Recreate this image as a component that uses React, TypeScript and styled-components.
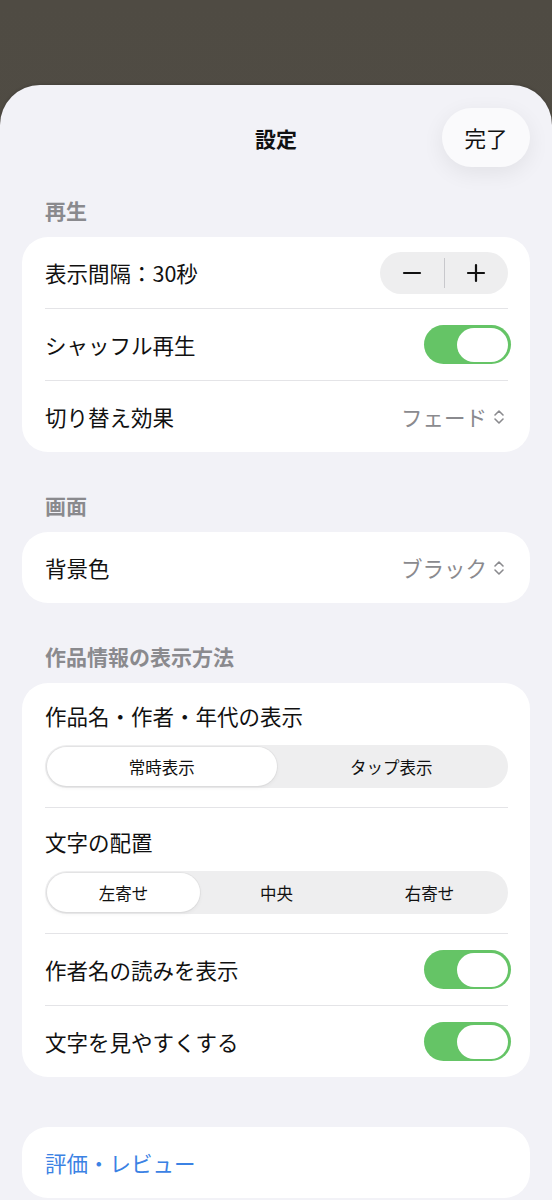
import React from 'react';
import styled, { createGlobalStyle } from 'styled-components';

const GlobalStyle = createGlobalStyle`
  html, body {
    margin: 0;
    padding: 0;
    background: #534f47;
  }
  body {
    font-family: "Noto Sans CJK JP", "Noto Sans", sans-serif;
    -webkit-font-smoothing: antialiased;
  }
`;

// --- LAYOUT ---

const Backdrop = styled.div`
  min-height: 1200px;
  padding-top: 85px;
  box-sizing: border-box;
  background: linear-gradient(180deg, #4f4b43 0%, #555149 100%);
`;

const Sheet = styled.div`
  background: #f2f2f7;
  border-radius: 40px 40px 0 0;
  min-height: 1115px;
  padding: 0 22px 40px;
  box-sizing: border-box;
  box-shadow: 0 -1px 3px rgba(0, 0, 0, 0.15);
`;

const Header = styled.header`
  height: 113px;
  display: grid;
  grid-template-columns: 88px 1fr 88px;
  align-items: start;
  padding-top: 23px;
  box-sizing: border-box;
`;

const Title = styled.h1`
  grid-column: 2;
  margin: 0;
  height: 59px;
  display: flex;
  align-items: center;
  justify-content: center;
  font-size: 21px;
  font-weight: 700;
  color: #111;
`;

const DoneButton = styled.button`
  grid-column: 3;
  width: 88px;
  height: 59px;
  border: none;
  border-radius: 30px;
  background: #fafafc;
  box-shadow: 0 6px 22px rgba(0, 0, 0, 0.07);
  font-family: inherit;
  font-size: 21.5px;
  color: #111;
  padding: 0;
`;

const SectionTitle = styled.h2<{ $first?: boolean }>`
  margin: ${p => (p.$first ? '0' : '41px')} 0 15px;
  padding: 0 23px;
  font-size: 21px;
  line-height: 24px;
  font-weight: 700;
  color: #8a8a8e;
`;

const Card = styled.section<{ $gap?: number }>`
  background: #fff;
  border-radius: 26px;
  padding: 0 22px 0 23px;
  margin-top: ${p => p.$gap ?? 0}px;
`;

const Row = styled.div`
  height: 71px;
  display: flex;
  align-items: center;
  justify-content: space-between;
  & + & {
    border-top: 1px solid #e4e4e7;
  }
`;

const Block = styled.div<{ $top: number; $bottom: number }>`
  padding: ${p => p.$top}px 0 ${p => p.$bottom}px;
  display: flex;
  flex-direction: column;
  gap: 15px;
`;

const Divider = styled.div`
  height: 1px;
  background: #e4e4e7;
`;

const Label = styled.span<{ $link?: boolean }>`
  font-size: 21.5px;
  line-height: 28px;
  color: ${p => (p.$link ? '#3b82e4' : '#111')};
`;

const Value = styled.span`
  display: flex;
  align-items: center;
  gap: 6px;
  font-size: 21.5px;
  color: #8a8a8e;
  margin-right: 3px;
`;

// --- CONTROLS ---

const Stepper = styled.div`
  width: 128px;
  height: 42px;
  border-radius: 21px;
  background: #eeeeef;
  display: flex;
  align-items: center;
`;

const StepButton = styled.button`
  flex: 1;
  height: 100%;
  border: none;
  background: transparent;
  display: flex;
  align-items: center;
  justify-content: center;
  padding: 0;
  color: #111;
`;

const StepDivider = styled.div`
  width: 1px;
  height: 30px;
  background: #c8c8cc;
`;

const Toggle = styled.div<{ $on: boolean }>`
  width: 87px;
  height: 39px;
  border-radius: 20px;
  background: ${p => (p.$on ? '#65c466' : '#e5e5ea')};
  display: flex;
  align-items: center;
  justify-content: ${p => (p.$on ? 'flex-end' : 'flex-start')};
  padding: 0 3px;
  box-sizing: border-box;
  margin-right: -3px;
`;

const Knob = styled.div`
  width: 51px;
  height: 34px;
  border-radius: 17px;
  background: #fff;
`;

const Segmented = styled.div<{ $count: number }>`
  height: 43px;
  border-radius: 22px;
  background: #eeeeef;
  padding: 2px;
  box-sizing: border-box;
  display: grid;
  grid-template-columns: repeat(${p => p.$count}, 1fr);
`;

const Segment = styled.div<{ $active: boolean }>`
  display: flex;
  align-items: center;
  justify-content: center;
  border-radius: 20px;
  font-size: 16.5px;
  font-weight: 400;
  color: #111;
  background: ${p => (p.$active ? '#fff' : 'transparent')};
  box-shadow: ${p => (p.$active ? '0 0 0 1px rgba(0,0,0,0.04), 0 2px 4px rgba(0,0,0,0.05)' : 'none')};
`;

// --- ICONS ---

const Minus = () => (
  <svg width="20" height="20" viewBox="0 0 20 20">
    <path d="M2 10h16" stroke="currentColor" strokeWidth="2.2" strokeLinecap="round" />
  </svg>
);

const Plus = () => (
  <svg width="20" height="20" viewBox="0 0 20 20">
    <path d="M2 10h16M10 2v16" stroke="currentColor" strokeWidth="2.2" strokeLinecap="round" />
  </svg>
);

const UpDown = () => (
  <svg width="12" height="18" viewBox="0 0 12 18" fill="none">
    <path d="M2 7l4-4 4 4M2 11l4 4 4-4" stroke="#8a8a8e" strokeWidth="1.6" strokeLinecap="round" strokeLinejoin="round" />
  </svg>
);

// --- COMPONENT ---

export default function App() {
  return (
    <>
      <GlobalStyle />
      <Backdrop>
        <Sheet>
          <Header>
            <Title>設定</Title>
            <DoneButton>完了</DoneButton>
          </Header>

          <SectionTitle $first>再生</SectionTitle>
          <Card>
            <Row>
              <Label>表示間隔：30秒</Label>
              <Stepper>
                <StepButton><Minus /></StepButton>
                <StepDivider />
                <StepButton><Plus /></StepButton>
              </Stepper>
            </Row>
            <Row>
              <Label>シャッフル再生</Label>
              <Toggle $on><Knob /></Toggle>
            </Row>
            <Row>
              <Label>切り替え効果</Label>
              <Value>フェード<UpDown /></Value>
            </Row>
          </Card>

          <SectionTitle>画面</SectionTitle>
          <Card>
            <Row>
              <Label>背景色</Label>
              <Value>ブラック<UpDown /></Value>
            </Row>
          </Card>

          <SectionTitle>作品情報の表示方法</SectionTitle>
          <Card>
            <Block $top={19} $bottom={19}>
              <Label>作品名・作者・年代の表示</Label>
              <Segmented $count={2}>
                <Segment $active>常時表示</Segment>
                <Segment $active={false}>タップ表示</Segment>
              </Segmented>
            </Block>
            <Divider />
            <Block $top={20} $bottom={19}>
              <Label>文字の配置</Label>
              <Segmented $count={3}>
                <Segment $active>左寄せ</Segment>
                <Segment $active={false}>中央</Segment>
                <Segment $active={false}>右寄せ</Segment>
              </Segmented>
            </Block>
            <Divider />
            <Row>
              <Label>作者名の読みを表示</Label>
              <Toggle $on><Knob /></Toggle>
            </Row>
            <Row>
              <Label>文字を見やすくする</Label>
              <Toggle $on><Knob /></Toggle>
            </Row>
          </Card>

          <Card $gap={50}>
            <Row>
              <Label $link>評価・レビュー</Label>
            </Row>
          </Card>
        </Sheet>
      </Backdrop>
    </>
  );
}
